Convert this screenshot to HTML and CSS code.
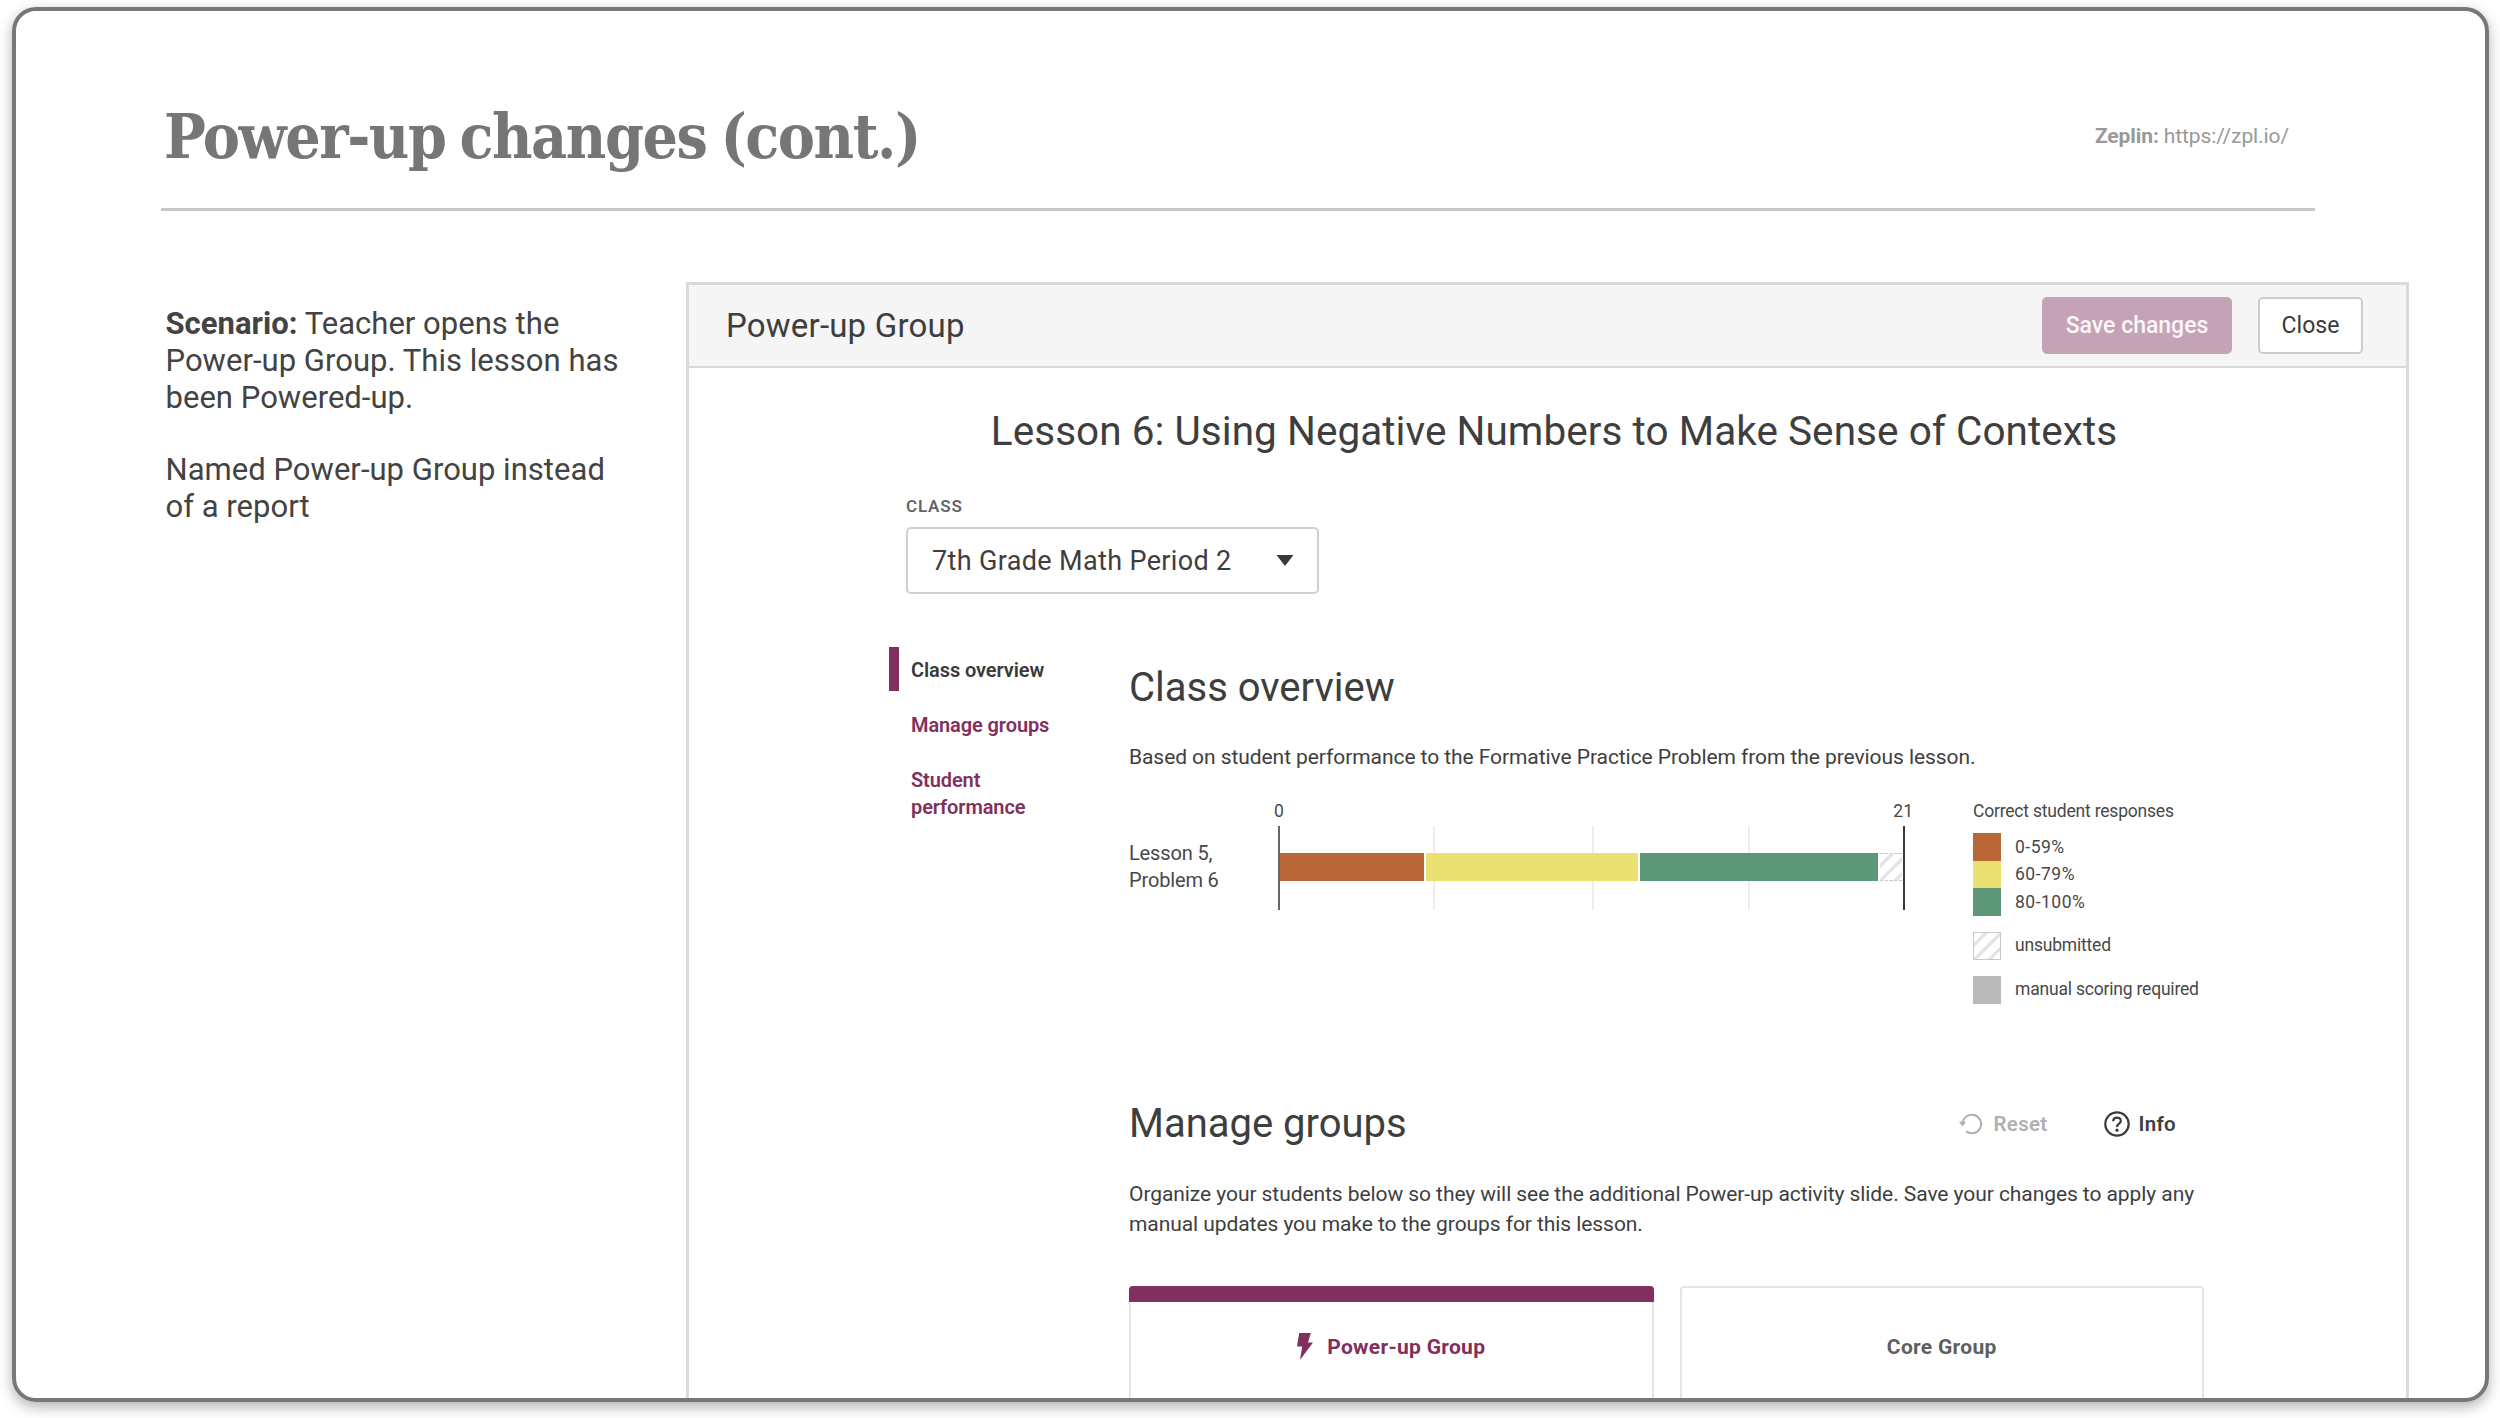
FILE: index.html
```html
<!DOCTYPE html>
<html lang="en">

<head>
  <meta charset="UTF-8">
  <meta name="viewport" content="width=device-width, initial-scale=1.0">
  <title>Power-up changes</title>
  <link rel="stylesheet" href="styles.css">
</head>

<body>
  <div class="slide">
    <div class="slide-header">
      <h1>Power-up changes (cont.)</h1>
      <div class="zeplin"><b>Zeplin:</b> https://zpl.io/</div>
    </div>

    <div class="slide-body">
      <div class="notes">
        <p><b>Scenario:</b> Teacher opens the Power-up Group. This lesson has been Powered-up.</p>
        <p>Named Power-up Group instead of a report</p>
      </div>

      <div class="panel">
        <div class="panel-header">
          <div class="panel-title">Power-up Group</div>
          <button class="btn btn-save">Save changes</button>
          <button class="btn btn-close">Close</button>
        </div>

        <h2 class="lesson-title">Lesson 6: Using Negative Numbers to Make Sense of Contexts</h2>

        <div class="class-picker">
          <div class="picker-label">CLASS</div>
          <div class="picker">
            <span>7th Grade Math Period 2</span>
            <svg width="18" height="11" viewBox="0 0 18 11"><path d="M0.5 0H17.5L9 11Z" fill="#3a3a3a"/></svg>
          </div>
        </div>

        <div class="columns">
          <div class="nav">
            <a class="active">Class overview</a>
            <a>Manage groups</a>
            <a>Student performance</a>
          </div>

          <div class="main">
            <h3>Class overview</h3>
            <p class="intro">Based on student performance to the Formative Practice Problem from the previous lesson.</p>

            <div class="chart">
              <div class="row-label">Lesson 5,<br>Problem 6</div>
              <div class="plot">
                <div class="axis"><span>0</span><span>21</span></div>
                <div class="track">
                  <div class="bar">
                    <div class="low" style="width: 143.5px"></div>
                    <div class="mid" style="width: 212px"></div>
                    <div class="high" style="width: 238px"></div>
                    <div class="none" style="width: 22.5px"></div>
                  </div>
                </div>
              </div>
              <div class="legend">
                <div class="legend-title">Correct student responses</div>
                <div class="legend-item"><i class="low"></i><span class="range">0-59%</span></div>
                <div class="legend-item"><i class="mid"></i><span class="range">60-79%</span></div>
                <div class="legend-item"><i class="high"></i><span class="range">80-100%</span></div>
                <div class="legend-item spaced"><i class="none"></i><span>unsubmitted</span></div>
                <div class="legend-item spaced"><i class="manual"></i><span>manual scoring required</span></div>
              </div>
            </div>

            <div class="section-head">
              <h3>Manage groups</h3>
              <div class="action reset">
                <svg width="24" height="24" viewBox="0 0 24 24" fill="none" stroke="#b0b0b0" stroke-width="2">
                  <path d="M3.5 11.5A9.3 9.3 0 1 1 7 19.3"/>
                  <path d="M0 9.8H7L3.5 14.6Z" fill="#b0b0b0" stroke="none"/>
                </svg>
                Reset
              </div>
              <div class="action info">
                <svg width="26" height="26" viewBox="0 0 26 26" fill="none" stroke="#3a3a3a" stroke-width="2.2">
                  <circle cx="13" cy="13" r="11.7"/>
                  <path d="M9.2 10.3C9.2 8 10.8 6.7 13 6.7S16.8 8 16.8 10.1C16.8 12.7 13 12.8 13 16"/>
                  <circle cx="13" cy="19.2" r="1.6" fill="#3a3a3a" stroke="none"/>
                </svg>
                Info
              </div>
            </div>
            <p class="intro">Organize your students below so they will see the additional Power-up activity slide. Save your changes to apply any manual updates you make to the groups for this lesson.</p>

            <div class="cards">
              <div class="card selected">
                <div class="band"></div>
                <div class="card-title">
                  <svg width="16" height="27" viewBox="0 0 16 27"><path d="M2.2 0H13.8L11 9.5H16L3 27L5.2 13.5H0Z" fill="#822f5d"/></svg>
                  Power-up Group
                </div>
              </div>
              <div class="card">
                <div class="card-title">Core Group</div>
              </div>
            </div>
          </div>
        </div>
      </div>
    </div>
  </div>
</body>

</html>
```
FILE: styles.css
```css
* {
  box-sizing: border-box;
}

body {
  margin: 0;
  height: 1418px;
  padding: 7px 11px 16px 12px;
  overflow: hidden;
  background-color: #fff;
  font-family: Roboto, sans-serif;
  color: #3e3e3e;
}

h1, h2, h3, p {
  margin: 0;
  font-weight: 400;
}

.slide {
  height: 1395px;
  border: 4px solid #777;
  border-radius: 24px;
  box-shadow: 0 5px 14px rgba(0, 0, 0, 0.3);
  overflow: hidden;
}

.slide-header {
  display: flex;
  justify-content: space-between;
  width: 2154px;
  height: 200px;
  margin-left: 145px;
  padding: 91px 26px 0 3px;
  border-bottom: 3px solid #c8c8c8;
}

.slide-header h1 {
  font-family: "Roboto Slab", "DejaVu Serif Condensed", "DejaVu Serif", serif;
  font-size: 62px;
  font-weight: 700;
  line-height: 70px;
  letter-spacing: -1.45px;
  word-spacing: -4px;
  color: #757678;
}

.zeplin {
  margin-top: -1px;
  font-size: 21px;
  line-height: 70px;
  letter-spacing: -0.1px;
  color: #999;
}

.slide-body {
  display: flex;
}

/* left column */
.notes {
  width: 462px;
  margin-left: 149.5px;
  padding-top: 94px;
  font-size: 31px;
  line-height: 37px;
  letter-spacing: 0.03px;
  color: #434343;
}

.notes p {
  margin-bottom: 35px;
}

/* app window */
.panel {
  width: 1723px;
  height: 1200px;
  margin: 71px 0 0 58.5px;
  border: 3px solid #dadada;
}

.panel-header {
  display: flex;
  align-items: center;
  height: 83px;
  padding: 0 43px 1px 37px;
  background-color: #f5f5f5;
  border-bottom: 2px solid #d9d9d9;
}

.panel-title {
  flex: 1;
  font-size: 33px;
  letter-spacing: 0.2px;
}

.btn {
  height: 57px;
  padding: 0;
  border: 2px solid #ccc;
  border-radius: 5px;
  font-family: inherit;
  font-size: 23px;
  letter-spacing: 0.1px;
}

.btn-save {
  width: 190px;
  margin-right: 26px;
  background-color: #c5a3b7;
  border-color: #c5a3b7;
  font-weight: 500;
  letter-spacing: 0;
  color: #fbf6f9;
}

.btn-close {
  width: 105px;
  background-color: #fff;
  color: #3a3a3a;
}

.lesson-title {
  padding: 38px 0 0 13px;
  font-size: 40.5px;
  line-height: 50px;
  letter-spacing: 0.05px;
  text-align: center;
}

.class-picker {
  margin: 40px 0 0 217px;
}

.picker-label {
  font-size: 17px;
  font-weight: 600;
  line-height: 20px;
  letter-spacing: 0.8px;
  color: #666;
}

.picker {
  display: flex;
  align-items: center;
  justify-content: space-between;
  width: 413px;
  height: 67px;
  margin-top: 11px;
  padding: 0 23px 0 24px;
  border: 2px solid #d0d0d0;
  border-radius: 5px;
  font-size: 27px;
  letter-spacing: 0.35px;
}

.columns {
  display: flex;
  padding: 53px 0 0 200px;
}

.nav {
  width: 240px;
}

.nav a {
  display: block;
  width: 175px;
  margin-bottom: 11px;
  padding: 9.5px 0 7px 12px;
  border-left: 10px solid transparent;
  font-size: 20px;
  font-weight: 600;
  line-height: 27.5px;
  letter-spacing: -0.1px;
  color: #822f5d;
}

.nav a:last-child {
  width: 150px;
}

.nav a.active {
  border-left-color: #822f5d;
  color: #3a3a3a;
}

.main {
  width: 1075px;
  padding-top: 17px;
}

h3 {
  font-size: 40px;
  line-height: 48px;
}

.intro {
  margin-top: 30px;
  font-size: 21px;
  line-height: 30px;
  letter-spacing: -0.07px;
}

/* results bar */
.chart {
  display: flex;
  margin-top: 29px;
  font-size: 17.5px;
  line-height: 20px;
  color: #484848;
}

.row-label {
  width: 149px;
  padding-top: 38.5px;
  font-size: 20px;
  line-height: 27.5px;
  letter-spacing: -0.15px;
}

.plot {
  width: 627px;
}

.axis {
  display: flex;
  justify-content: space-between;
  margin: 0 -8px 5px -4px;
}

.track {
  height: 84px;
  padding-top: 27px;
  border-left: 2px solid #666;
  border-right: 2px solid #3a3a3a;
  background-image: linear-gradient(#eee, #eee), linear-gradient(#eee, #eee), linear-gradient(#eee, #eee);
  background-size: 2px 100%;
  background-position: 153px 0, 312px 0, 468px 0;
  background-repeat: no-repeat;
}

.bar {
  display: flex;
  gap: 2px;
  height: 28px;
  background-color: #fff;
}

.low {
  background-color: #b96737;
}

.mid {
  background-color: #ebe173;
}

.high {
  background-color: #5c9777;
}

.none {
  border: 1.5px solid #c8c8c8;
  background-image: repeating-linear-gradient(135deg, #fff 0 7px, #e5e5e5 7px 10.5px);
}

.bar .none {
  border-width: 1px 0;
  border-style: dashed;
}

.manual {
  background-color: #bababa;
}

.legend {
  margin-left: 68px;
}

.legend-title {
  margin-bottom: 12.5px;
  letter-spacing: -0.2px;
}

.legend-item {
  display: flex;
  align-items: center;
  gap: 14px;
  height: 27.6px;
  letter-spacing: -0.2px;
}

.legend-item.spaced {
  margin-top: 16px;
}

.legend-item i {
  width: 28px;
  height: 28px;
}

.legend-item span {
  margin-top: -2px;
}

.legend-item .range {
  margin-top: -1px;
  letter-spacing: 0.5px;
}

.section-head {
  display: flex;
  align-items: center;
  margin-top: 96.5px;
  padding-right: 28px;
}

.section-head h3 {
  flex: 1;
}

.section-head + .intro {
  margin-top: 31px;
}

.action {
  display: flex;
  align-items: center;
  font-size: 20.5px;
  font-weight: 600;
  letter-spacing: 0.3px;
}

.reset {
  gap: 11px;
  margin-right: 56px;
  color: #b0b0b0;
}

.info {
  gap: 9px;
}

.cards {
  display: flex;
  gap: 26px;
  margin-top: 47px;
}

.card {
  flex: 1;
  height: 160px;
  padding-top: 44px;
  border: 2px solid #e6e6e6;
  border-radius: 4px;
}

.card.selected {
  padding-top: 0;
  border-top: none;
}

.band {
  height: 16px;
  margin: 0 -2px 30px;
  background-color: #822f5d;
  border-radius: 4px 4px 0 0;
}

.card-title {
  display: flex;
  align-items: center;
  justify-content: center;
  gap: 14px;
  font-size: 21px;
  font-weight: 700;
  line-height: 30px;
  letter-spacing: 0.3px;
  color: #5f5f5f;
}

.selected .card-title {
  color: #822f5d;
}
```
